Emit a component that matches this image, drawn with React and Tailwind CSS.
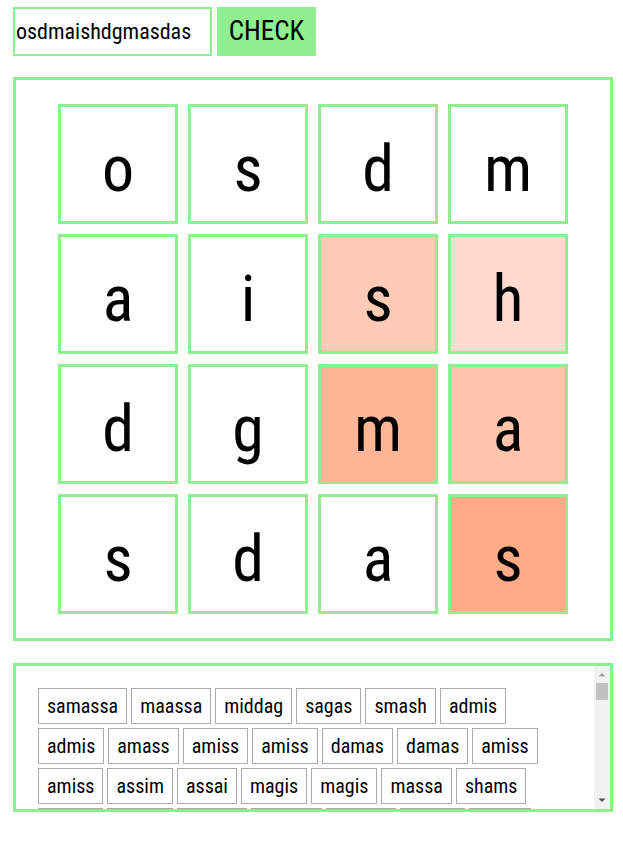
import React, { useState } from "react";

const letters = "osdmaishdgmasdas".split("");
const heat = { 6: "bg-[#ffcbb4]", 7: "bg-[#ffdccd]", 10: "bg-[#ffb596]", 11: "bg-[#ffc4a9]", 15: "bg-[#ffab87]" };

const words = [
  "samassa", "maassa", "middag", "sagas", "smash", "admis",
  "admis", "amass", "amiss", "amiss", "damas", "damas", "amiss",
  "amiss", "assim", "assai", "magis", "magis", "massa", "shams",
  "sagas", "sagas", "smash", "samas", "samas", "asdas", "dams",
  "mass", "miss", "mass", "said", "sama", "masa", "dams",
];

const font = "font-['Roboto_Condensed','Liberation_Sans_Narrow',Roboto,sans-serif]";

export default function App() {
  const [value, setValue] = useState("osdmaishdgmasdas");

  return (
    <div className={`w-[623px] h-[843px] bg-white text-black ${font}`}>
      <div className="flex gap-[5px] pt-[7px] pl-[13px]">
        <input
          type="text"
          value={value}
          onChange={(e) => setValue(e.target.value)}
          className="w-[199px] h-[49px] border-2 border-[#90ee90] px-[1px] text-[22px] outline-none"
        />
        <button className="w-[99px] h-[49px] bg-[#90ee90] text-[27px] leading-none">CHECK</button>
      </div>

      <div className="ml-[13px] w-[600px] mt-[21px] h-[564px] border-[3px] border-[#90ee90] flex items-center justify-center">
        <div className="grid grid-cols-[repeat(4,120px)] gap-[10px]">
          {letters.map((ch, i) => (
            <div
              key={i}
              className={`w-[120px] h-[120px] border-[3px] border-[#90ee90] flex items-center justify-center text-[64px] leading-none pt-[12px] ${heat[i] || "bg-white"}`}
            >
              {ch}
            </div>
          ))}
        </div>
      </div>

      <div className="ml-[13px] w-[600px] mt-[22px] h-[149px] border-[3px] border-[#90ee90] flex">
        <div className="flex-1 overflow-hidden pt-[20px] px-[20px]">
          <div className="flex flex-wrap">
            {words.map((w, i) => (
              <span
                key={i}
                className="m-[2px] h-[36px] px-[8px] border border-[#aaa] flex items-center text-[20px]"
              >
                {w}
              </span>
            ))}
          </div>
        </div>
        <div className="w-[16px] bg-[#f1f1f1] flex flex-col items-center">
          <svg width="16" height="16" viewBox="0 0 16 16" className="shrink-0">
            <path d="M4.5 10.5 L8 7 L11.5 10.5 Z" fill="#a3a3a3" />
          </svg>
          <div className="w-[12px] h-[17px] bg-[#c1c1c1] mt-[1px]" />
          <div className="flex-1" />
          <svg width="16" height="16" viewBox="0 0 16 16" className="shrink-0">
            <path d="M4.5 5.5 L8 9 L11.5 5.5 Z" fill="#505050" />
          </svg>
        </div>
      </div>
    </div>
  );
}
